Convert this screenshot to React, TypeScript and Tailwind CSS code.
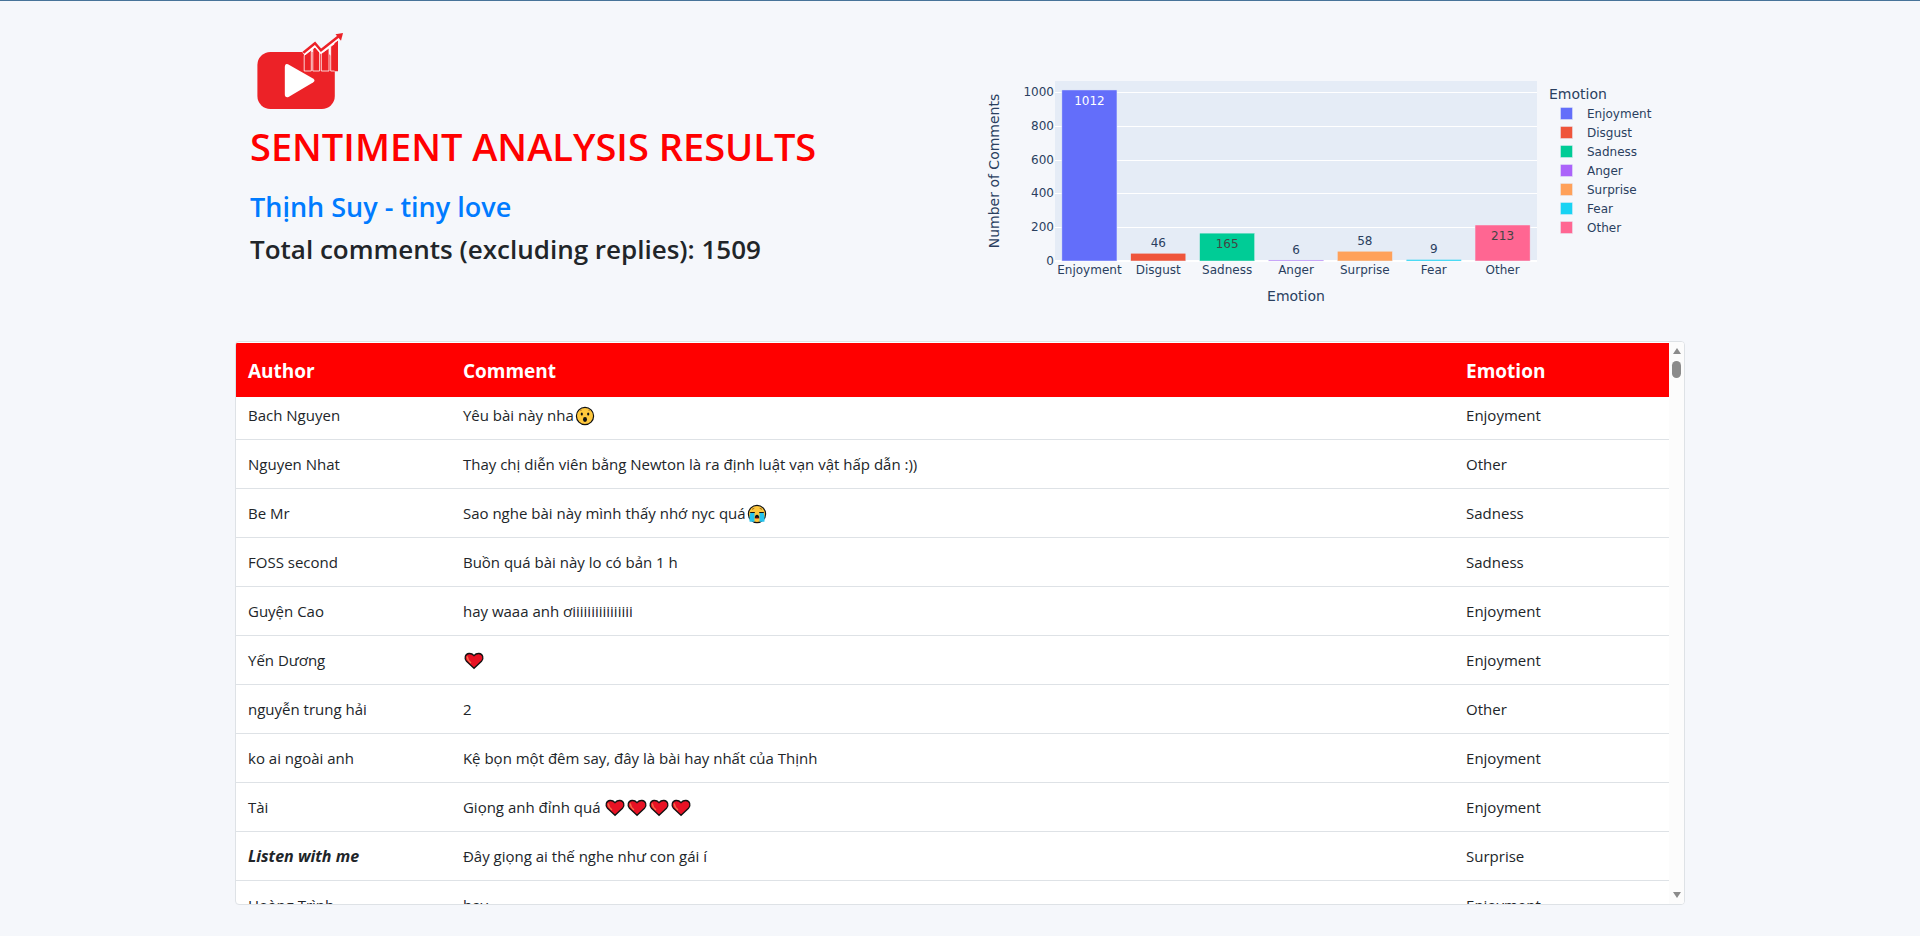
import type { ReactNode } from "react";

const emotions = [
  { name: "Enjoyment", count: 1012, color: "#636efa" },
  { name: "Disgust", count: 46, color: "#ef553b" },
  { name: "Sadness", count: 165, color: "#00cc96" },
  { name: "Anger", count: 6, color: "#ab63fa" },
  { name: "Surprise", count: 58, color: "#ffa15a" },
  { name: "Fear", count: 9, color: "#19d3f3" },
  { name: "Other", count: 213, color: "#ff6692" },
];

function Logo() {
  return (
    <svg viewBox="0 0 88 78" className="block h-[78px] w-[88px]" role="img" aria-label="Logo">
      <rect x="0.4" y="19" width="77.400" height="57" rx="13" fill="#ec2227" />
      <path d="M31 31.300 L56 45.500 Q59 47.500 56 49.500 L31.500 64 Q27.800 65 27.800 61 V34 Q28 30 31 31.300Z" fill="#fff" />
      <g fill="#ec2227" stroke="#fff" strokeWidth="0.8">
        <path d="M47.200 22.500 L54.300 17 V38 H47.200Z" />
        <path d="M55.800 16 L58 14 L62.600 19 V38 H55.800Z" />
        <path d="M64.300 20.500 L72 15 V38 H64.300Z" />
        <path d="M73.700 13.500 L80.500 8.500 V38 H73.700Z" />
      </g>
      <path d="M77.500 10 L81 7.500 V38.300 H77.500Z" fill="#ec2227" />
      <path d="M46.500 21 L58 11.500 L64 18.800 L82 4" fill="none" stroke="#fff" strokeWidth="3.600" />
      <path d="M46.300 19.800 L58 10.300 L64 17.300 L82 3" fill="none" stroke="#ec2227" strokeWidth="2.500" />
      <path d="M78.500 1.300 L86 0 L84 7.700Z" fill="#ec2227" />
    </svg>
  );
}

function Heart() {
  return (
    <svg viewBox="0 0 22 18" className="inline-block h-[18px] w-[22px] align-[-4px]" role="img" aria-label="red heart">
      <path
        d="M11 16.300 L3.500 9.300 C0.800 6.400 2.200 1.800 6 1.500 C8.200 1.300 9.800 2.300 11 3.700 C12.200 2.300 13.800 1.300 16 1.500 C19.800 1.800 21.200 6.400 18.500 9.300Z"
        fill="#e81224"
        stroke="#111"
        strokeWidth="1.300"
      />
      <path d="M4.300 5 Q4.500 8 7.500 10.500" fill="none" stroke="#f4704a" strokeWidth="1.500" strokeLinecap="round" />
    </svg>
  );
}

function Surprised() {
  return (
    <svg viewBox="0 0 22 20" className="inline-block h-5 w-[22px] align-[-5px]" role="img" aria-label="surprised face">
      <circle cx="11" cy="10" r="8.600" fill="#ffc83d" stroke="#111" strokeWidth="1.200" />
      <ellipse cx="7.800" cy="8" rx="1.100" ry="1.500" fill="#111" />
      <ellipse cx="14.200" cy="8" rx="1.100" ry="1.500" fill="#111" />
      <path d="M5.700 4.900 L8 4 M14 4 L16.300 4.900" stroke="#b5812b" strokeWidth="0.700" />
      <ellipse cx="11" cy="13.500" rx="2" ry="2.400" fill="#111" />
    </svg>
  );
}

function Crying() {
  return (
    <svg viewBox="0 0 22 20" className="inline-block h-5 w-[22px] align-[-5px]" role="img" aria-label="crying face">
      <circle cx="11" cy="10" r="8.600" fill="#ffc83d" stroke="#111" strokeWidth="1.200" />
      <path d="M4.500 8.500 H8.500 V17.800 H3.600 Q3 13 4.500 8.500Z M13.500 8.500 H17.500 Q19 13 18.400 17.800 H13.500Z" fill="#26c4ee" />
      <path d="M4.200 8.500 H8.800 M13.200 8.500 H17.800" stroke="#111" strokeWidth="1.100" />
      <path d="M6 5.300 L8.300 4.300 M13.700 4.300 L16 5.300" stroke="#7a5518" strokeWidth="0.800" />
      <path d="M8.800 14.300 Q8.800 10.800 11 10.800 Q13.200 10.800 13.200 14.300Z" fill="#111" />
      <path d="M9.500 14.300 H12.500" stroke="#f03a17" strokeWidth="1" />
    </svg>
  );
}

type Row = { author: ReactNode; comment: ReactNode; emotion: string };

const rows: Row[] = [
  { author: "Bach Nguyen", comment: <>Yêu bài này nha<Surprised /></>, emotion: "Enjoyment" },
  { author: "Nguyen Nhat", comment: "Thay chị diễn viên bằng Newton là ra định luật vạn vật hấp dẫn :))", emotion: "Other" },
  { author: "Be Mr", comment: <>Sao nghe bài này mình thấy nhớ nyc quá<Crying /></>, emotion: "Sadness" },
  { author: "FOSS second", comment: "Buồn quá bài này lo có bản 1 h", emotion: "Sadness" },
  { author: "Guyện Cao", comment: "hay waaa anh ơiiiiiiiiiiiiiiii", emotion: "Enjoyment" },
  { author: "Yến Dương", comment: <Heart />, emotion: "Enjoyment" },
  { author: "nguyễn trung hải", comment: "2", emotion: "Other" },
  { author: "ko ai ngoài anh", comment: "Kệ bọn một đêm say, đây là bài hay nhất của Thịnh", emotion: "Enjoyment" },
  { author: "Tài", comment: <>Giọng anh đỉnh quá <Heart /><Heart /><Heart /><Heart /></>, emotion: "Enjoyment" },
  { author: <strong className="text-[16px] font-bold italic">Listen with me</strong>, comment: "Đây giọng ai thế nghe như con gái í", emotion: "Surprise" },
  { author: "Hoàng Trình", comment: "hay", emotion: "Enjoyment" },
];

const plot = { left: 95, top: 41, width: 482, height: 180 };
const baseline = plot.top + plot.height;
const yOf = (value: number) => baseline - value * 0.169;
const slot = plot.width / emotions.length;

function EmotionChart() {
  return (
    <svg
      viewBox="0 0 725 290"
      className="block w-full font-['DejaVu_Sans',Verdana,sans-serif] text-[12px]"
      fill="#2a3f5f"
      role="img"
      aria-label="Number of comments by emotion"
    >
      <rect x={plot.left} y={plot.top} width={plot.width} height={plot.height} fill="#e5ecf6" />
      {[0, 200, 400, 600, 800, 1000].map((tick) => (
        <g key={tick}>
          <rect
            x={plot.left}
            y={Math.round(yOf(tick)) - (tick === 0 ? 1 : 0)}
            width={plot.width}
            height={tick === 0 ? 2 : 1}
            fill="#fff"
          />
          <text x={plot.left - 1} y={yOf(tick) + 4} textAnchor="end">{tick}</text>
        </g>
      ))}
      {emotions.map((e, i) => {
        const center = plot.left + slot * (i + 0.5);
        const top = yOf(e.count);
        const inside = e.count > 100;
        const textFill = i === 0 ? "#fff" : inside ? "#444" : "#2a3f5f";
        return (
          <g key={e.name}>
            <rect x={center - slot * 0.4} y={top} width={slot * 0.8} height={baseline - top} fill={e.color} stroke="#e5ecf6" strokeWidth="0.5" />
            <text x={center} y={inside ? top + 15 : top - 6} textAnchor="middle" fill={textFill}>{e.count}</text>
            <text x={center} y={baseline + 13} textAnchor="middle">{e.name}</text>
          </g>
        );
      })}
      <text x={plot.left + plot.width / 2} y="261" textAnchor="middle" className="text-[14px]">Emotion</text>
      <text x="39" y="131" textAnchor="middle" transform="rotate(-90 39 131)" className="text-[14px]">Number of Comments</text>
      <text x="589" y="59" className="text-[14px]">Emotion</text>
      {emotions.map((e, i) => (
        <g key={e.name}>
          <rect x="600.500" y={67.5 + i * 19} width="12" height="12" fill={e.color} stroke="#e5ecf6" strokeWidth="0.5" />
          <text x="627" y={78 + i * 19}>{e.name}</text>
        </g>
      ))}
    </svg>
  );
}

function ScrollTrack() {
  return (
    <div className="flex w-[15px] shrink-0 flex-col items-center bg-[#fcfcfc] py-1.5" aria-hidden="true">
      <svg viewBox="0 0 8 6" className="h-1.5 w-2"><path d="M4 0 L8 6 H0Z" fill="#8b8b8b" /></svg>
      <div className="mt-[7px] h-[17px] w-[9px] rounded-full bg-[#8b8b8b]" />
      <svg viewBox="0 0 8 6" className="mt-auto h-1.5 w-2"><path d="M4 6 L8 0 H0Z" fill="#8b8b8b" /></svg>
    </div>
  );
}

export default function App() {
  return (
    <div className="min-h-screen border-t border-[#477399] bg-[#f5f7fb] px-6 font-['Open_Sans','Noto_Sans',sans-serif] text-[#212529]">
      <main className="mx-auto max-w-[1450px]">
        <header className="grid grid-cols-2">
          <div className="px-[15px] pt-8">
            <div className="ml-[7px]"><Logo /></div>
            <h1 className="mt-[11px] text-[38px] leading-[48px] font-semibold text-[#ff0000]">SENTIMENT ANALYSIS RESULTS</h1>
            <h2 className="mt-5 text-[27px] leading-[34px] font-semibold">
              <a href="#video" className="text-[#007bff]">Thịnh Suy - tiny love</a>
            </h2>
            <h2 className="mt-2 text-[26px] leading-[34px] font-semibold">Total comments (excluding replies): 1509</h2>
          </div>
          <div className="pt-[39px]">
            <EmotionChart />
          </div>
        </header>
        <section className="mt-[11px] flex h-[564px] overflow-hidden rounded-[4px] border border-[#dee2e6] bg-white">
          <div className="flex-1 overflow-y-auto pt-px [scrollbar-width:none]">
            <table className="w-full table-fixed border-collapse text-left text-[15px] leading-6">
              <thead className="bg-[#ff0000] text-[19px] text-white">
                <tr>
                  <th className="h-[54px] w-[15%] px-3 pt-0.5 font-bold">Author</th>
                  <th className="h-[54px] w-[70%] px-3 pt-0.5 font-bold">Comment</th>
                  <th className="h-[54px] w-[15%] px-3 pt-0.5 font-bold">Emotion</th>
                </tr>
              </thead>
              <tbody className="[&>tr:first-child>td]:h-[42px] [&>tr:first-child>td]:pb-1.5">
                {rows.map((row, i) => (
                  <tr key={i} className="border-b border-[#dee2e6]">
                    <td className="h-[49px] px-3 whitespace-nowrap">{row.author}</td>
                    <td className="h-[49px] px-3">{row.comment}</td>
                    <td className="h-[49px] px-3">{row.emotion}</td>
                  </tr>
                ))}
              </tbody>
            </table>
          </div>
          <ScrollTrack />
        </section>
      </main>
    </div>
  );
}
